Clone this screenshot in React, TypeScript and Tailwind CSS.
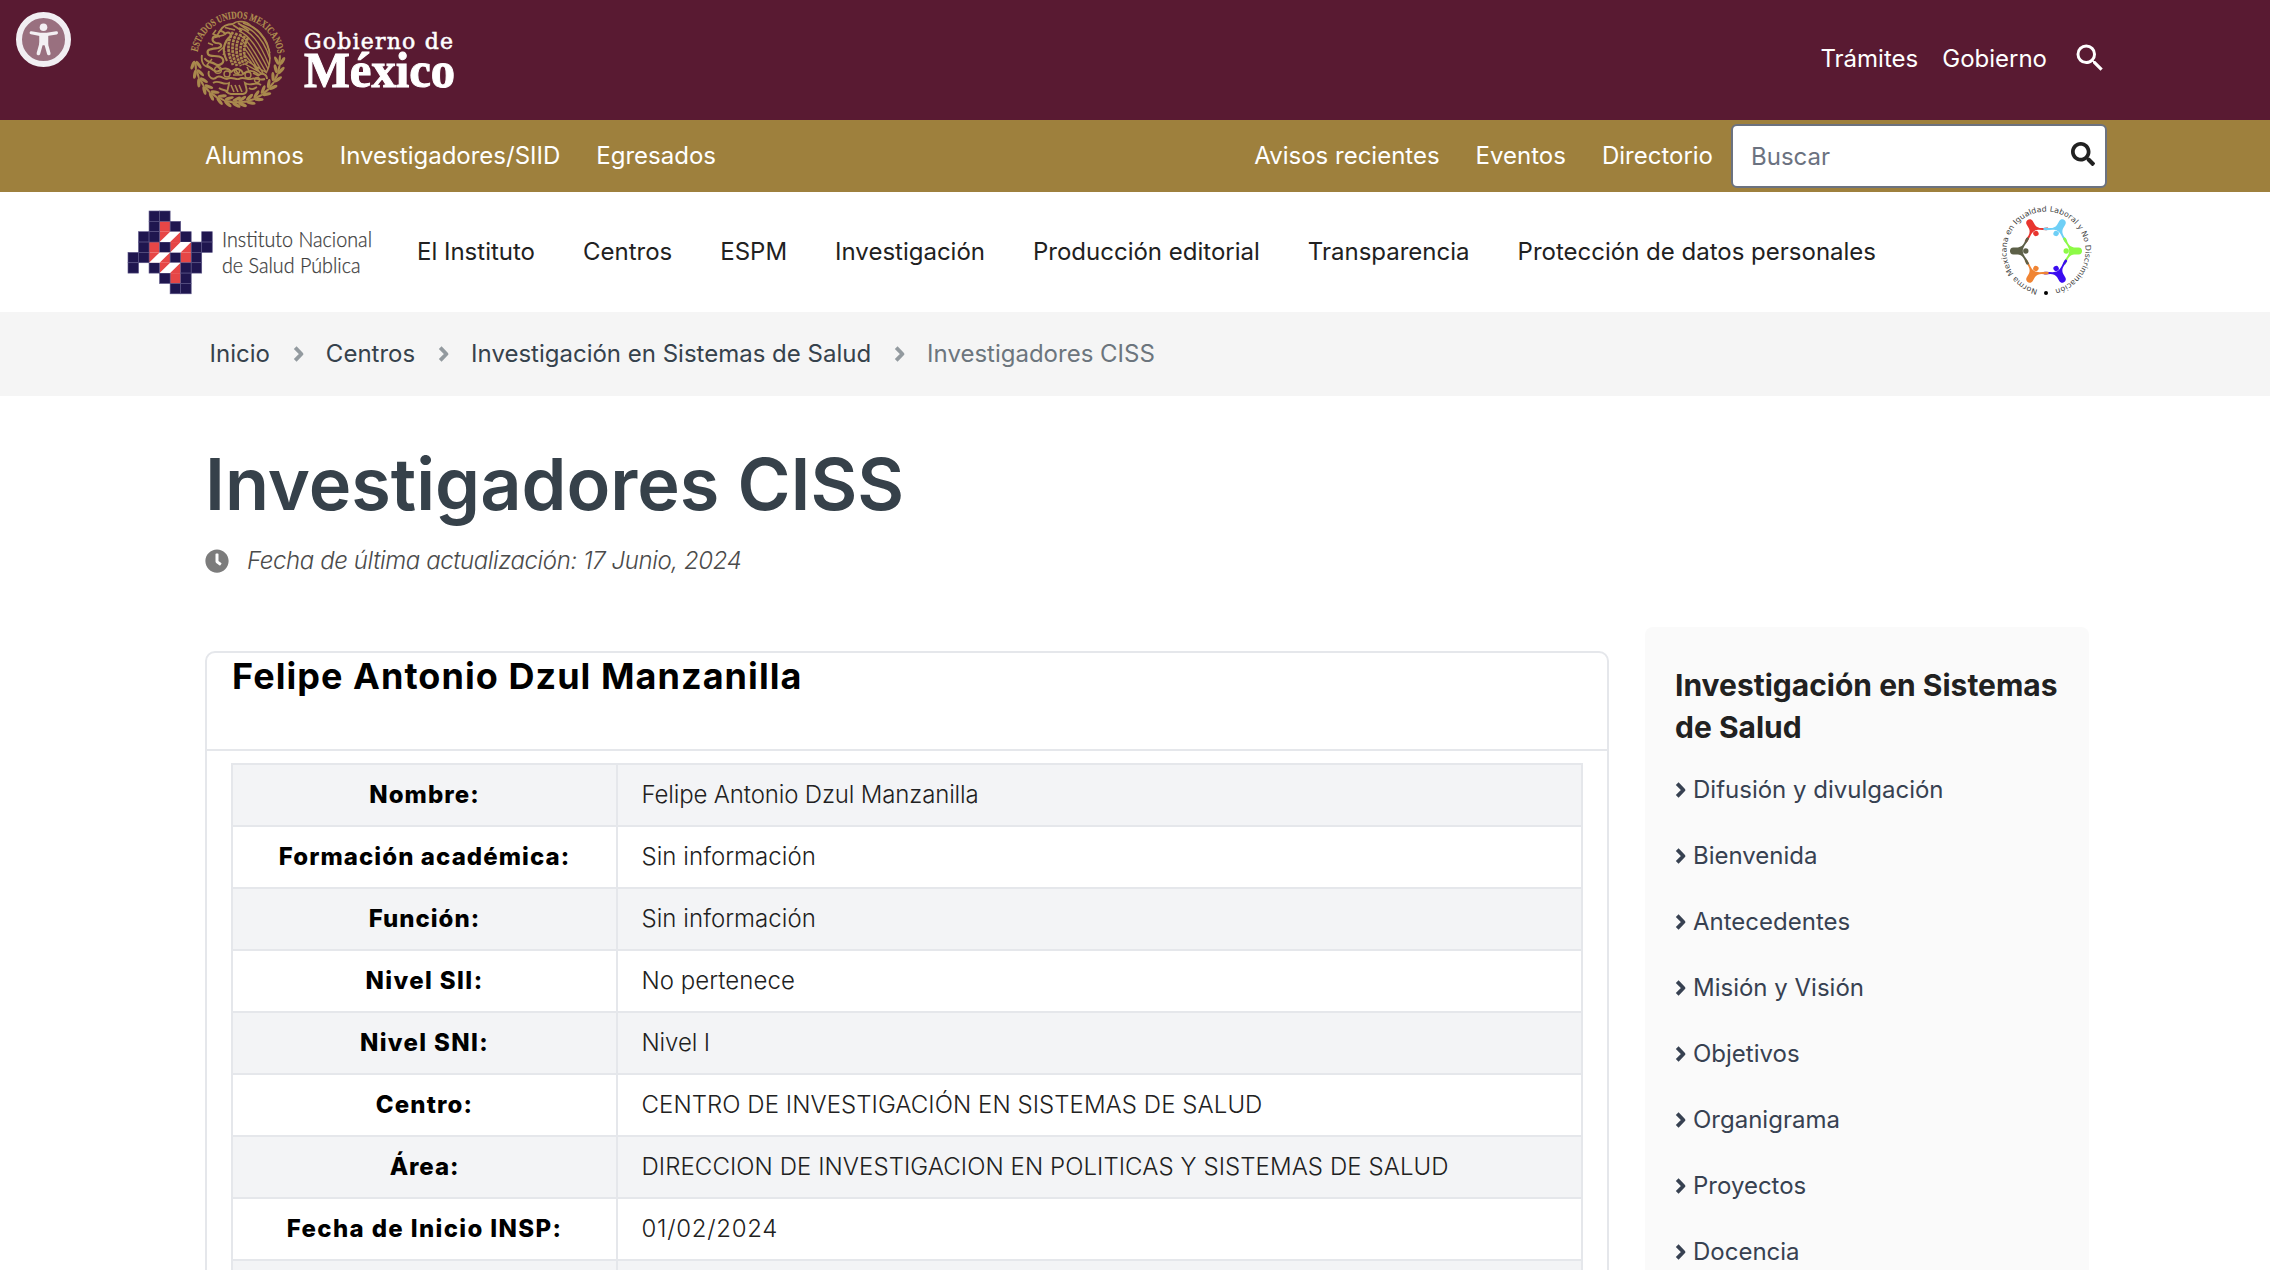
import { FaClock, FaSearch } from "react-icons/fa";
import { MdSearch } from "react-icons/md";

const mainNav = [
  "El Instituto",
  "Centros",
  "ESPM",
  "Investigación",
  "Producción editorial",
  "Transparencia",
  "Protección de datos personales",
];

const rows: { label: string; value: string; tracking: string; labelTracking: string }[] = [
  { label: "Nombre:", value: "Felipe Antonio Dzul Manzanilla", tracking: "tracking-[-0.15px]", labelTracking: "tracking-[1.05px]" },
  { label: "Formación académica:", value: "Sin información", tracking: "tracking-[0.05px]", labelTracking: "tracking-[1.08px]" },
  { label: "Función:", value: "Sin información", tracking: "tracking-[0.05px]", labelTracking: "tracking-[1px]" },
  { label: "Nivel SII:", value: "No pertenece", tracking: "tracking-[0.05px]", labelTracking: "tracking-[1.4px]" },
  { label: "Nivel SNI:", value: "Nivel I", tracking: "tracking-[-0.1px]", labelTracking: "tracking-[1.35px]" },
  { label: "Centro:", value: "CENTRO DE INVESTIGACIÓN EN SISTEMAS DE SALUD", tracking: "tracking-[0.06px]", labelTracking: "tracking-[1.15px]" },
  { label: "Área:", value: "DIRECCION DE INVESTIGACION EN POLITICAS Y SISTEMAS DE SALUD", tracking: "tracking-[0.07px]", labelTracking: "tracking-[0.9px]" },
  { label: "Fecha de Inicio INSP:", value: "01/02/2024", tracking: "tracking-[0.7px]", labelTracking: "tracking-[1.36px]" },
  { label: "", value: "", tracking: "tracking-normal", labelTracking: "tracking-normal" },
];

const sideLinks = [
  "Difusión y divulgación",
  "Bienvenida",
  "Antecedentes",
  "Misión y Visión",
  "Objetivos",
  "Organigrama",
  "Proyectos",
  "Docencia",
];

function Chevron({ className }: { className: string }) {
  return (
    <svg viewBox="0 0 11 16" className={`h-4 w-[11px] ${className}`} fill="none" stroke="currentColor" strokeWidth="3.8">
      <path d="M2.2 1.6 L8.4 8 L2.2 14.4" strokeLinejoin="round" />
    </svg>
  );
}

function AccessibilityButton() {
  return (
    <svg viewBox="0 0 55 55" className="h-[55px] w-[55px]">
      <circle cx="27.5" cy="27.5" r="24.5" fill="#99707f" stroke="#f1eef2" strokeWidth="6" />
      <g fill="none" stroke="#f3f0f3" strokeLinecap="round" strokeLinejoin="round">
        <circle cx="27.5" cy="15.2" r="3.8" fill="#f3f0f3" stroke="none" />
        <path d="M15.2 20.8 L24 22.4 H31 L40.4 20.8" strokeWidth="3.2" />
        <path d="M24 22 h7.5 v10.5 h-7.5 z" fill="#f3f0f3" strokeWidth="1.5" />
        <path d="M25.2 31.5 L22.4 41.5 M30 31.5 L32.8 41.5" strokeWidth="3.6" />
      </g>
    </svg>
  );
}

/* Laurel and oak leaves around the lower half of the seal. */
const leafAngles = [4, 16, 28, 40, 52, 64, 75, 86, 94, 105, 116, 128, 140, 152, 164, 176];

function Seal() {
  return (
    <svg viewBox="0 0 96 98" className="h-[98px] w-[96px] overflow-visible" fill="none" stroke="#a9894d">
      <defs>
        <path id="seal-arc" d="M7.6 42 A40.5 40.5 0 0 1 87.4 42" />
      </defs>
      <text fill="#b08f50" stroke="#b08f50" strokeWidth=".2" fontFamily="'Liberation Serif', serif" fontWeight="700" fontSize="10.4">
        <textPath href="#seal-arc" startOffset="0" textLength="115" lengthAdjust="spacingAndGlyphs">
          ESTADOS UNIDOS MEXICANOS
        </textPath>
      </text>
      <g stroke="none" fill="#a9894d">
        {leafAngles.map((a) => (
          <g key={a} transform={`rotate(${a} 47.5 50)`}>
            <ellipse cx="92.4" cy="48" rx="1.7" ry="4.6" transform="rotate(26 92.4 48)" />
            <ellipse cx="86.6" cy="48" rx="1.6" ry="4.6" transform="rotate(-30 86.6 48)" />
            <ellipse cx="89.6" cy="46.5" rx="1.1" ry="4.6" />
          </g>
        ))}
      </g>
      <g transform="translate(-1 -1)">
        {/* head, beak and crest */}
        <path d="M44 15 C48 11 58 12 62 17 C68 20 74 26 78 34 C82 44 82 56 77 64" strokeWidth="1.6" />
        <path d="M44 15 C38 15 33 18 31 22 C33 22 35 23 36 25 C39 22 42 24 42 27 C39 29 36 34 35 38 C34 43 36 48 38 52" strokeWidth="2.2" />
        <path d="M36 18.5 L46 21 M31 22 L27 28 L35 26 M40 20 h.5 M44 16 L53 22 M49 14 L60 22" strokeWidth="1.8" />
        {/* breast plumage */}
        <path
          d="M44 23 C38 32 38 44 44 56 M48 24 C42 33 42 45 48 57 M52 25 C46 34 46 46 52 57 M56 27 C50 36 50 46 55 56 M59 29 C54 37 54 46 58 55"
          strokeWidth="2.7"
          strokeDasharray="2.8 .8"
        />
        {/* wing feathers */}
        <path
          d="M50 19 C62 22 70 32 80 56 M52 16 C65 20 75 31 81 50 M50 22 C60 26 68 38 79 60 M52 27 C60 32 66 44 77 63 M54 33 C60 38 64 48 74 64 M55 39 C60 44 64 52 71 64 M55 45 C60 50 64 56 69 62 M58 52 L78 64 M56 55 L74 65 M54 14 C68 18 77 30 81 44"
          strokeWidth="1.4"
        />
        {/* serpent */}
        <path
          d="M30 27 C22 26 22 33 27 34 C33 34 34 38 29 39 C22 40 17 40 19 45 C21 49 29 45 33 49 C37 53 31 58 26 55 C22 53 18 53 16 50"
          strokeWidth="2.2"
          strokeLinecap="round"
        />
        <path d="M27 21 L24 25 L31 28 M24 36 L19 34 M36 42 L34 46 M23 50 L18 56 L24 60 M29 43 L35 38" strokeWidth="1.5" />
        {/* cactus, rock and water */}
        <path
          d="M13 46 C12 52 14 57 19 58 C24 59 24 64 30 62 C34 58 40 59 42 63 C47 58 53 60 54 65 C60 60 66 62 70 66 C74 63 78 66 78 70 M20 62 C18 68 24 72 28 68 C32 66 34 70 38 70 C43 67 46 71 50 70 C54 67 58 71 62 70 C66 68 70 72 76 70 M24 74 C30 70 34 77 40 74 C40 80 35 84 42 85 H54 C60 84 57 79 56 74 C62 78 66 72 72 76 M30 79 C34 82 38 80 38 84 M60 79 C64 82 66 79 68 78"
          strokeWidth="1.9"
        />
        <path d="M42 76 L45 83 M46 76 L49 83 M50 76 L53 83 M44 66 h9 M28 57 l4 4 M46 60 l4 6 M58 58 l3 6 M64 64 l6 3" strokeWidth="1.6" />
        <g strokeWidth="1.4">
          <circle cx="29" cy="61" r="3.4" />
          <circle cx="38" cy="65" r="3" />
          <circle cx="59" cy="66" r="3" />
          <circle cx="68" cy="71" r="2.5" />
          <circle cx="48" cy="62" r="2.6" />
        </g>
      </g>
    </svg>
  );
}

function MexicoWordmark() {
  return (
    <svg viewBox="0 0 152 62" className="h-[62px] w-[152px] overflow-visible" fill="#fff" stroke="#fff">
      <text x="0" y="20.5" textLength="149" fontFamily="'DejaVu Serif', serif" fontSize="22" strokeWidth=".55">
        Gobierno de
      </text>
      <text x="0" y="59" textLength="151" lengthAdjust="spacingAndGlyphs" fontFamily="'Liberation Serif', serif" fontWeight="700" fontSize="50" strokeWidth="1">
        México
      </text>
    </svg>
  );
}

/* [column, row] of the navy and red squares in the institute's mosaic. */
const navy = [
  [2, 0], [3, 0], [2, 1], [4, 1], [1, 2], [2, 2], [5, 2], [7, 2], [1, 3], [3, 3], [6, 3], [7, 3],
  [0, 4], [1, 4], [4, 4], [6, 4], [0, 5], [2, 5], [5, 5], [6, 5], [3, 6], [5, 6], [4, 7], [5, 7],
];
const red = [[3, 1], [3, 2], [4, 2], [2, 3], [4, 3], [5, 3], [2, 4], [3, 4], [5, 4], [3, 5], [4, 5], [4, 6]];

function InstituteLogo() {
  return (
    <svg viewBox="0 0 246 84" className="h-[84px] w-[246px] overflow-visible">
      <g transform="scale(10.53 10.35)">
        {red.map(([x, y]) => (
          <rect key={`${x}-${y}`} x={x} y={y} width="1" height="1" fill="#e64646" />
        ))}
        {navy.map(([x, y]) => (
          <rect key={`${x}-${y}`} x={x} y={y} width="1" height="1" fill="#1f164f" stroke="#5b5486" strokeWidth=".06" />
        ))}
        <path d="M3 3 L4 2 H5 L4 3 Z M4 4 L5 3 H6 L5 4 Z M2 5 L3 4 H4 L3 5 Z M3 6 L4 5 H5 L4 6 Z" fill="#fff" />
      </g>
      <g fill="#3c3c3c" fontFamily="Lato, sans-serif" fontWeight="300" fontSize="21" stroke="#3c3c3c" strokeWidth=".25">
        <text x="94" y="35.5" textLength="150" lengthAdjust="spacingAndGlyphs">Instituto Nacional</text>
        <text x="94" y="61.5" textLength="138.5" lengthAdjust="spacingAndGlyphs">de Salud Pública</text>
      </g>
    </svg>
  );
}

const people = [
  { angle: -120, color: "#e8352f" },
  { angle: -60, color: "#6ecff6" },
  { angle: 0, color: "#8dfa46" },
  { angle: 60, color: "#3a0cf0" },
  { angle: 120, color: "#f08433" },
  { angle: 180, color: "#5d6048" },
];

function EqualityBadge() {
  return (
    <svg viewBox="0 0 96 96" className="h-[96px] w-[96px] overflow-visible">
      <defs>
        <path id="badge-ring" d="M39.6 86.6 A39.5 39.5 0 1 1 56.4 86.6" />
      </defs>
      <text fill="#454545" fontFamily="'DejaVu Sans', sans-serif" fontSize="7.6">
        <textPath href="#badge-ring" textLength="230" lengthAdjust="spacingAndGlyphs">
          Norma Mexicana en Igualdad Laboral y No Discriminación
        </textPath>
      </text>
      <circle cx="48" cy="90" r="2" fill="#000" />
      {people.map((p) => (
        <g key={p.angle} transform={`translate(48 48) rotate(${p.angle})`} fill={p.color}>
          <circle cx="20.2" cy="0" r="2.7" />
          <path d="M17 -12.4 C17.4 -14 19.4 -14 20 -12.4 C22 -6.6 24 -4 28 -3.5 H32.6 C37.2 -3.5 37.2 3.5 32.6 3.5 H28 C24 4 22 6.6 20 12.4 C19.4 14 17.4 14 17 12.4 C18.4 8.6 23.2 4.4 23.2 0 C23.2 -4.4 18.4 -8.6 17 -12.4 Z" />
        </g>
      ))}
    </svg>
  );
}

function Crumb({ children }: { children: string }) {
  return (
    <>
      <span>{children}</span>
      <Chevron className="mr-[22px] ml-[23px] text-[#939a9f]" />
    </>
  );
}

export default function App() {
  return (
    <div className="h-[1270px] w-full overflow-hidden bg-white font-[Inter,sans-serif] text-2xl leading-9 text-[#212121]">
      <header className="flex h-[120px] items-start bg-[#591a32] text-white">
        <div className="pt-3 pl-4">
          <AccessibilityButton />
        </div>
        <div className="flex items-start pt-[10px] pl-[119px]">
          <Seal />
          <div className="pt-[18px] pl-[18px]">
            <MexicoWordmark />
          </div>
        </div>
        <nav className="mr-[162px] ml-auto flex items-center pt-[39px] whitespace-nowrap">
          <a className="mr-6 pt-0.5">Trámites</a>
          <a className="mr-[25px] pt-0.5">Gobierno</a>
          <MdSearch className="size-9" />
        </nav>
      </header>

      <div className="flex h-[72px] items-center bg-[#9e803d] pl-[205px] whitespace-nowrap text-white">
        <nav className="flex gap-9">
          <a>Alumnos</a>
          <a>Investigadores/SIID</a>
          <a>Egresados</a>
        </nav>
        <nav className="mr-[18px] ml-auto flex gap-9">
          <a>Avisos recientes</a>
          <a>Eventos</a>
          <a>Directorio</a>
        </nav>
        <div className="mr-[163px] flex h-16 w-[376px] items-center justify-between rounded-md border-2 border-[#6b7280] bg-white pr-[10px] pl-[18px]">
          <span className="pt-0.5 text-[#6b7280]">Buscar</span>
          <FaSearch className="mb-1 size-6 text-[#212121]" />
        </div>
      </div>

      <div className="flex h-[120px] items-center pr-[176px] pl-[128px]">
        <div className="pt-0.5">
          <InstituteLogo />
        </div>
        <nav className="ml-[43px] flex gap-12 whitespace-nowrap">
          {mainNav.map((item) => (
            <a key={item}>{item}</a>
          ))}
        </nav>
        <div className="ml-auto pb-[3px]">
          <EqualityBadge />
        </div>
      </div>

      <div className="flex h-[84px] items-center bg-[#f5f5f5] pl-[209.5px] whitespace-nowrap text-[#36424c]">
        <Crumb>Inicio</Crumb>
        <Crumb>Centros</Crumb>
        <Crumb>Investigación en Sistemas de Salud</Crumb>
        <span className="text-[#6c757d]">Investigadores CISS</span>
      </div>

      <main className="pl-[205px]">
        <h1 className="mt-[45px] text-[72px] leading-[86px] font-semibold text-[#36414a]">Investigadores CISS</h1>
        <p className="mt-[15px] flex h-[38px] items-center text-[#4b4b4b]">
          <FaClock className="size-6 text-[#7c7c7c]" />
          <em className="ml-[18px] font-light tracking-[-0.4px]">Fecha de última actualización: 17 Junio, 2024</em>
        </p>

        <div className="mt-[47px] flex items-start">
          <section className="mt-6 h-[700px] w-[1404px] rounded-[10px] border-2 border-[#e5e7eb]">
            <h2 className="h-[98px] border-b-2 border-[#e5e7eb] pl-[25px] text-[36px] leading-[46px] font-bold tracking-[1.05px] text-black">
              Felipe Antonio Dzul Manzanilla
            </h2>
            <table className="mt-3 ml-6 w-[1352px] table-fixed border-collapse">
              <tbody>
                {rows.map((r, i) => (
                  <tr key={i} className="h-[62px] odd:bg-[#f3f4f6]">
                    <th className={`w-[385px] border-2 border-[#e5e7eb] font-extrabold text-black ${r.labelTracking}`}>{r.label}</th>
                    <td className={`border-2 border-[#e5e7eb] pl-[23.5px] font-light text-[#212121] ${r.tracking}`}>{r.value}</td>
                  </tr>
                ))}
              </tbody>
            </table>
          </section>

          <aside className="ml-9 h-[700px] w-[444px] rounded-lg bg-[#fafafa] px-[30px] pt-[37px]">
            <h3 className="text-[30px] leading-[42px] font-bold">Investigación en Sistemas de Salud</h3>
            <ul className="mt-[9px] text-[#374151]">
              {sideLinks.map((link) => (
                <li key={link} className="flex h-[66px] items-center">
                  <Chevron className="mr-[7px]" />
                  {link}
                </li>
              ))}
            </ul>
          </aside>
        </div>
      </main>
    </div>
  );
}
